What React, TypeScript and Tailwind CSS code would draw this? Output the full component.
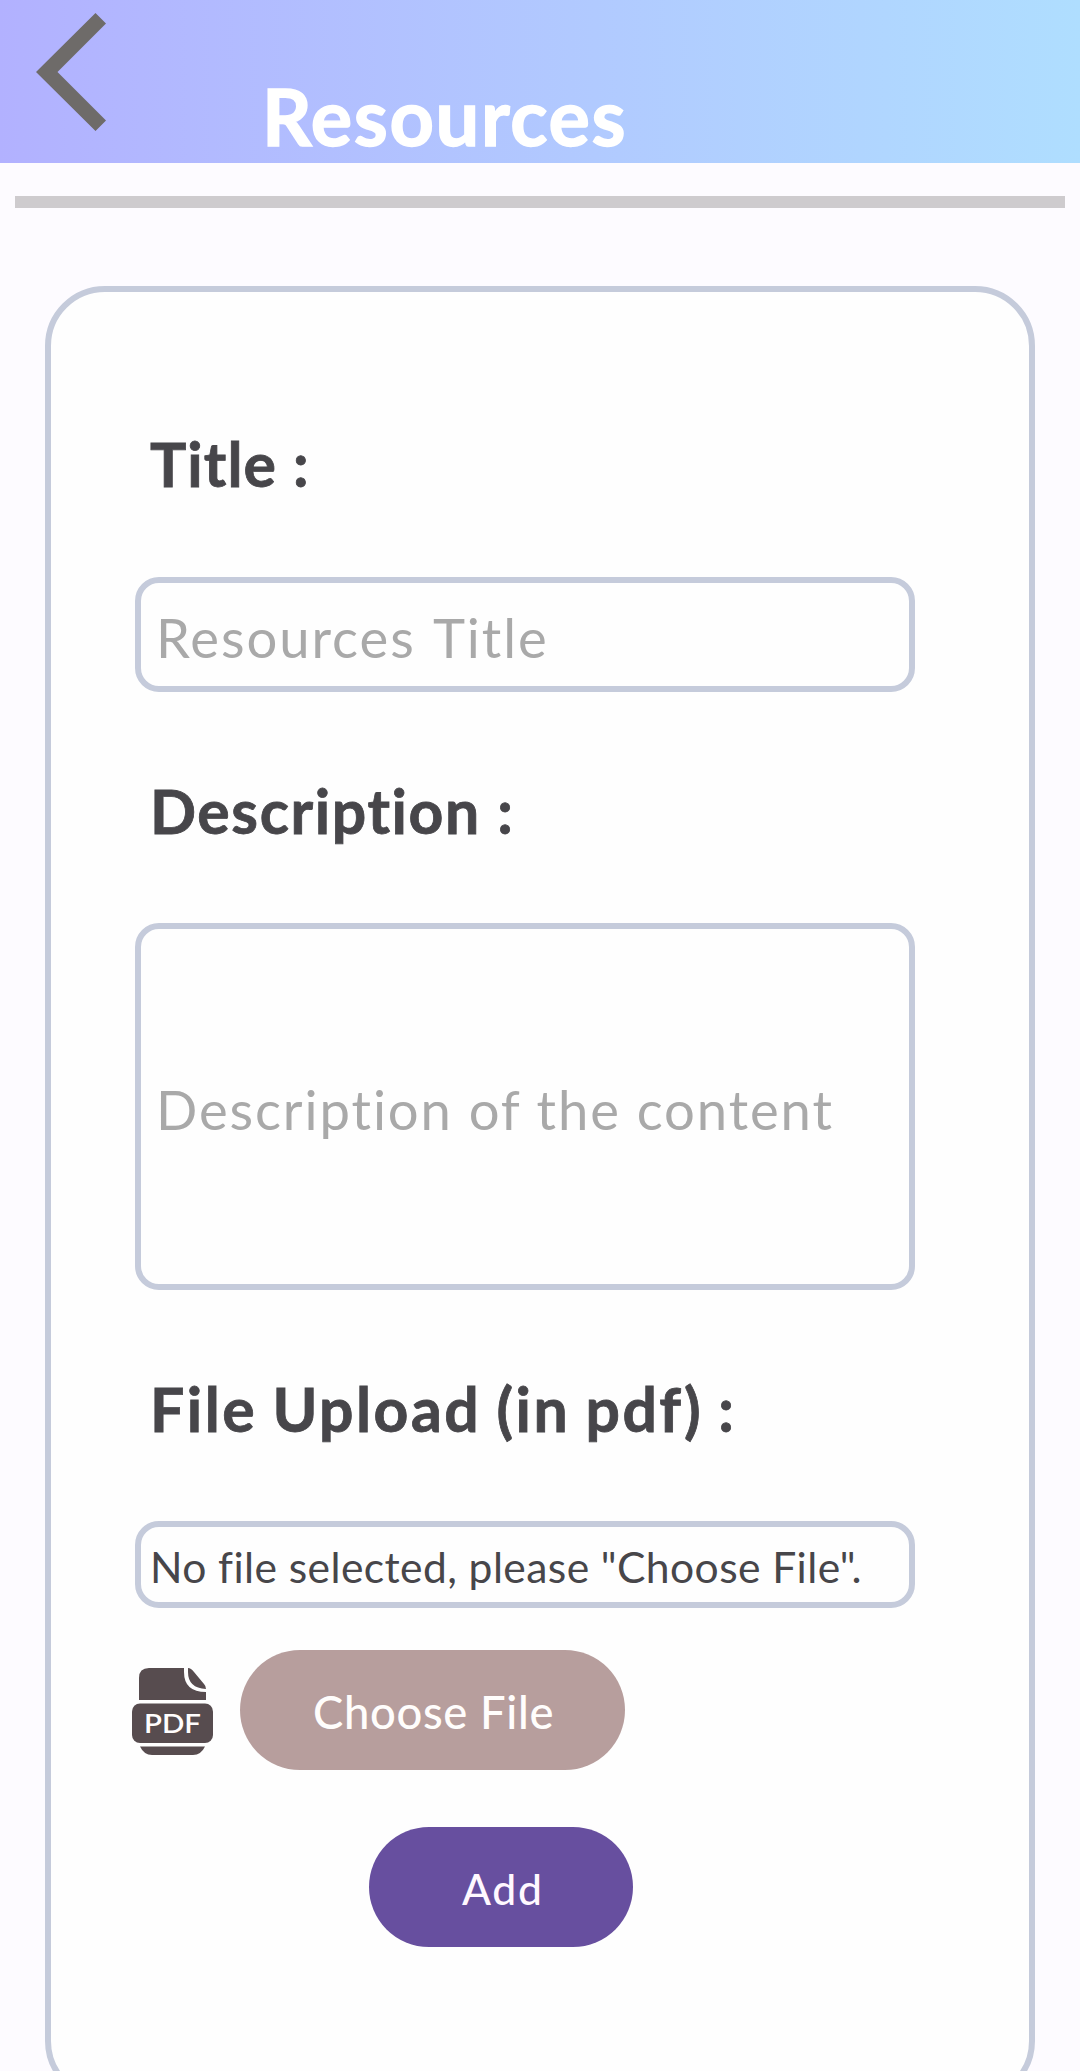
import React from "react";

function BackIcon() {
  return (
    <svg className="ml-9 mt-3 h-[120px] w-[71px]" viewBox="0 0 71 120" aria-label="Back">
      <path d="M59.5 1 70 11.5 21.5 60 70 108.5 59.5 119 0 60Z" fill="#6e6b69" />
    </svg>
  );
}

function PdfIcon() {
  return (
    <svg className="mt-[18px] h-[87px] w-[81px] shrink-0" viewBox="0 0 81 87" aria-label="PDF">
      <g fill="#574c4f">
        <path d="M17 0H52V4Q52 24 74 24V32H7V10Q7 0 17 0Z" />
        <path d="M56 0Q59 0 62 4L72 16Q74 18 74 21Q56 20 56 4Z" />
        <rect x="0" y="35.5" width="81" height="39.5" rx="8" />
        <path d="M8 78.5H73Q69 87 61 87H20Q12 87 8 78.5Z" />
      </g>
      <text x="12" y="65" textLength="57" lengthAdjust="spacingAndGlyphs" fill="#fffdfd" className="font-['Lato',sans-serif] text-[26.5px] font-semibold">
        PDF
      </text>
    </svg>
  );
}

function Label({ children }: { children: React.ReactNode }) {
  return (
    <h2 className="ml-[15px] text-[60.7px] font-bold leading-[60px] whitespace-nowrap [-webkit-text-stroke:0.8px_#47464a]">
      {children}
    </h2>
  );
}

export default function App() {
  return (
    <div className="flex h-[2071px] w-[1080px] flex-col overflow-hidden bg-[#fdfbff] font-['Lato',sans-serif] text-[#47464a]">
      <header className="flex h-[163px] shrink-0 items-start bg-linear-to-r from-[#b2b1ff] to-[#afdeff]">
        <BackIcon />
        <h1 className="ml-[155px] mt-[77px] text-[77.5px] font-bold leading-[80px] tracking-[1.6px] text-white [-webkit-text-stroke:1.4px_#fff]">
          Resources
        </h1>
      </header>
      <div className="mx-[15px] mt-[33px] h-3 shrink-0 bg-[#cecbce]" />
      <main className="mx-[45px] mt-[78px] flex h-[1815px] shrink-0 flex-col rounded-[60px] border-[6px] border-[#c5cbdb] bg-[#fefefe] pl-[84px] pt-[142px]">
        <Label><span className="tracking-[1.1px]">Title :</span></Label>
        <div className="mt-[83px] flex h-[115px] w-[780px] items-center rounded-3xl border-[6px] border-[#c5cbdb] pl-[15px] pt-[5px] text-[54.4px] leading-[60px] tracking-[1.95px] [word-spacing:3px] text-[#a9a9a9]">
          Resources Title
        </div>
        <div className="mt-[89px]"><Label><span className="tracking-[1.6px]">Description :</span></Label></div>
        <div className="mt-[82px] flex h-[367px] w-[780px] items-center rounded-3xl border-[6px] border-[#c5cbdb] pl-[15px] pt-[5px] text-[54.4px] leading-[60px] tracking-[1.9px] text-[#a9a9a9]">
          Description of the content
        </div>
        <div className="mt-[89px]"><Label><span className="tracking-[2.5px] [word-spacing:-2px]">File Upload (in pdf) :</span></Label></div>
        <div className="mt-[82px] flex h-[87px] w-[780px] items-center rounded-3xl border-[6px] border-[#c5cbdb] pl-[9px] pt-1 text-[42.6px] leading-[50px] tracking-[0.4px] whitespace-nowrap">
          No file selected, please "Choose File".
        </div>
        <div className="-ml-[3px] mt-[42px] flex items-start gap-[27px]">
          <PdfIcon />
          <button className="flex h-[120px] w-[385px] items-center rounded-full bg-[#b79e9d] pl-[73px] pt-1 text-[45.4px] font-medium leading-[50px] tracking-[0.65px] text-[#fffdfc]">
            Choose File
          </button>
        </div>
        <button className="ml-[234px] mt-[57px] flex h-[120px] w-[264px] items-center rounded-full bg-[#674f9f] pl-[93px] pt-1 text-[42.6px] font-medium leading-[50px] tracking-[1.7px] text-[#fff8ff]">
          Add
        </button>
      </main>
    </div>
  );
}
